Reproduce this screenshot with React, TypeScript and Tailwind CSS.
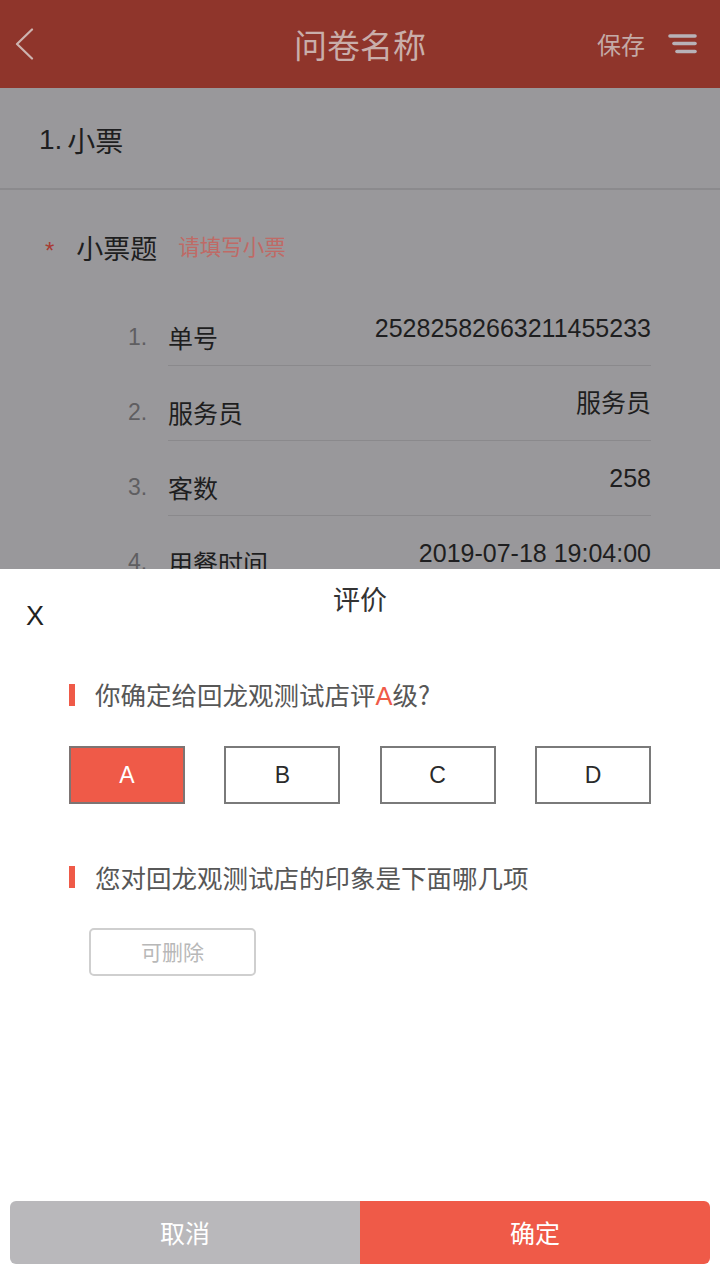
import React from "react";

const items = [
  { n: "1.", label: "单号", value: "25282582663211455233" },
  { n: "2.", label: "服务员", value: "服务员" },
  { n: "3.", label: "客数", value: "258" },
  { n: "4.", label: "用餐时间", value: "2019-07-18 19:04:00" },
];

export default function App() {
  return (
    <div className="w-[720px] h-[1280px] flex flex-col overflow-hidden bg-white font-['Liberation_Sans','Noto_Sans_CJK_SC',sans-serif]">
      {/* dimmed page behind sheet */}
      <div className="h-[569px] shrink-0 overflow-hidden bg-[#99989b] flex flex-col">
        <div className="h-[88px] shrink-0 bg-[#8f352b] grid grid-cols-[1fr_auto_1fr] items-center">
          <div className="pl-[15px] flex items-center">
            <svg width="20" height="32" viewBox="0 0 20 32" fill="none">
              <path d="M17 1.5 L2 16 L17 30.5" stroke="#cdb4b0" strokeWidth="2.2" strokeLinecap="round" strokeLinejoin="round" />
            </svg>
          </div>
          <div className="text-[33px] leading-[40px] text-[#c9aeaa] font-['Noto_Sans_CJK_SC',sans-serif]">问卷名称</div>
          <div className="flex items-center justify-end pr-[22px] gap-[23px]">
            <span className="text-[24px] leading-[30px] text-[#c4aaa6] font-['Noto_Sans_CJK_SC',sans-serif]">保存</span>
            <svg width="30" height="22" viewBox="0 0 30 22" fill="none">
              <path d="M2 3 H27" stroke="#b8b2b8" strokeWidth="3.6" strokeLinecap="round" />
              <path d="M6 10.5 H27" stroke="#b8b2b8" strokeWidth="3.6" strokeLinecap="round" />
              <path d="M9 18.5 H27" stroke="#b8b2b8" strokeWidth="3.6" strokeLinecap="round" />
            </svg>
          </div>
        </div>
        <div className="h-[102px] shrink-0 flex items-center pl-[39px] pt-[3px] border-b-2 border-[#8b8a8d] text-[28px] leading-[34px] text-[#1e1e20]">
          <span>1.</span>
          <span className="ml-[5px] font-['Noto_Sans_CJK_SC',sans-serif]">小票</span>
        </div>
        <div className="h-[101px] shrink-0 flex items-start pt-[42px] pl-[45px]">
          <span className="text-[24px] leading-[32px] text-[#a83b33] mt-[3px]">*</span>
          <span className="ml-[22px] text-[27px] leading-[32px] text-[#1e1e20] font-['Noto_Sans_CJK_SC',sans-serif]">小票题</span>
          <span className="ml-[21px] text-[21.5px] leading-[32px] text-[#bf6a66] font-['Noto_Sans_CJK_SC',sans-serif] -mt-[2px]">请填写小票</span>
        </div>
        {items.map((it) => (
          <div key={it.n} className="h-[75px] shrink-0 flex">
            <div className="w-[168px] shrink-0 pl-[128px] pt-[31px] leading-[30px]">
              <span className="text-[23px] text-[#5f5e61]">{it.n}</span>
            </div>
            <div className="flex-1 mr-[69px] border-b border-[#8a898c] flex justify-between items-start">
              <span className="pt-[31px] text-[25px] leading-[30px] text-[#1e1e20] font-['Noto_Sans_CJK_SC',sans-serif]">{it.label}</span>
              <span className="pt-[22px] text-[25px] leading-[30px] text-[#1e1e20]">{it.value}</span>
            </div>
          </div>
        ))}
      </div>

      {/* bottom sheet */}
      <div className="flex-1 bg-white flex flex-col">
        <div className="h-[61px] grid grid-cols-[1fr_auto_1fr] items-start">
          <div className="pl-[26px] pt-[34px] text-[27px] leading-[26px] text-[#222]">X</div>
          <div className="pt-[14px] text-[27px] leading-[32px] text-[#333] font-['Noto_Sans_CJK_SC',sans-serif]">评价</div>
          <div />
        </div>

        <div className="mt-[49px] h-[32px] flex items-center pl-[69px]">
          <div className="w-[6px] h-[22px] bg-[#ef5a48]" />
          <div className="ml-[20px] text-[25.5px] leading-[32px] text-[#575757] font-['Noto_Sans_CJK_SC',sans-serif]">
            你确定给回龙观测试店评<span className="text-[#ef5a48] font-['Liberation_Sans',sans-serif]">A</span>级?
          </div>
        </div>

        <div className="mt-[35px] mx-[69px] flex justify-between">
          {["A", "B", "C", "D"].map((l) => (
            <div
              key={l}
              className={
                l === "A"
                  ? "w-[116px] h-[58px] border-2 border-[#7d7473] bg-[#ef5a48] flex items-center justify-center text-[23px] text-white"
                  : "w-[116px] h-[58px] border-2 border-[#7a7a7a] bg-white flex items-center justify-center text-[23px] text-[#2a2a2a]"
              }
            >
              {l}
            </div>
          ))}
        </div>

        <div className="mt-[57px] h-[32px] flex items-center pl-[69px]">
          <div className="w-[6px] h-[22px] bg-[#ef5a48]" />
          <div className="ml-[20px] text-[25.5px] leading-[32px] text-[#575757] font-['Noto_Sans_CJK_SC',sans-serif]">
            您对回龙观测试店的印象是下面哪几项
          </div>
        </div>

        <div className="mt-[35px] ml-[89px] w-[167px] h-[48px] border-2 border-[#cfcfcf] rounded-[5px] flex items-center justify-center text-[21px] text-[#b8b8b8] font-['Noto_Sans_CJK_SC',sans-serif]">
          可删除
        </div>

        <div className="mt-auto mb-[16px] mx-[10px] h-[63px] rounded-[6px] overflow-hidden flex text-white text-[25px] font-['Noto_Sans_CJK_SC',sans-serif]">
          <div className="flex-1 bg-[#b9b8bb] flex items-center justify-center">取消</div>
          <div className="flex-1 bg-[#ef5a48] flex items-center justify-center">确定</div>
        </div>
      </div>
    </div>
  );
}
